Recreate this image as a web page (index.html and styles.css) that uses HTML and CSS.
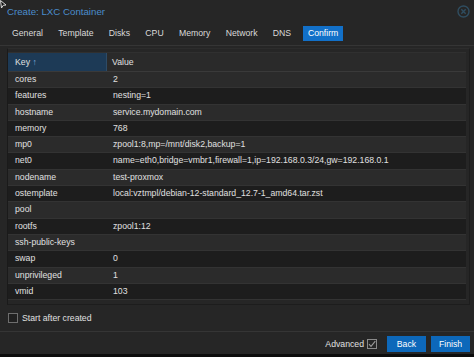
FILE: index.html
```html
<!DOCTYPE html>
<html>
<head>
<meta charset="utf-8">
<link rel="stylesheet" href="styles.css">
</head>
<body>
<div class="win">
  <div class="titlebar">
    <svg class="cursor" width="8" height="9" viewBox="0 0 8 9"><path d="M0.5 0.5 L6 5 L3.2 5.3 L1.5 8 Z" fill="#111" stroke="#ddd" stroke-width="1"/></svg>
    <span class="title">Create: LXC Container</span>
    <svg class="close" width="13" height="13" viewBox="0 0 13 13"><circle cx="6.5" cy="6.5" r="5.5" fill="none" stroke="#2f4d60" stroke-width="1.4"/><path d="M4.3 4.3 L8.7 8.7 M8.7 4.3 L4.3 8.7" stroke="#2f4d60" stroke-width="1.4"/></svg>
  </div>
  <div class="tabs">
    <span class="tab">General</span>
    <span class="tab">Template</span>
    <span class="tab">Disks</span>
    <span class="tab">CPU</span>
    <span class="tab">Memory</span>
    <span class="tab">Network</span>
    <span class="tab">DNS</span>
    <span class="tab active">Confirm</span>
  </div>
  <div class="panel">
    <div class="grid">
      <div class="row head"><div class="k">Key <span class="arrow">↑</span></div><div class="v">Value</div></div>
      <div class="row l"><div class="k">cores</div><div class="v">2</div></div>
      <div class="row d"><div class="k">features</div><div class="v">nesting=1</div></div>
      <div class="row l"><div class="k">hostname</div><div class="v">service.mydomain.com</div></div>
      <div class="row d"><div class="k">memory</div><div class="v">768</div></div>
      <div class="row l"><div class="k">mp0</div><div class="v">zpool1:8,mp=/mnt/disk2,backup=1</div></div>
      <div class="row d"><div class="k">net0</div><div class="v">name=eth0,bridge=vmbr1,firewall=1,ip=192.168.0.3/24,gw=192.168.0.1</div></div>
      <div class="row l"><div class="k">nodename</div><div class="v">test-proxmox</div></div>
      <div class="row d"><div class="k">ostemplate</div><div class="v">local:vztmpl/debian-12-standard_12.7-1_amd64.tar.zst</div></div>
      <div class="row l"><div class="k">pool</div><div class="v"></div></div>
      <div class="row d"><div class="k">rootfs</div><div class="v">zpool1:12</div></div>
      <div class="row l"><div class="k">ssh-public-keys</div><div class="v"></div></div>
      <div class="row d"><div class="k">swap</div><div class="v">0</div></div>
      <div class="row l"><div class="k">unprivileged</div><div class="v">1</div></div>
      <div class="row d"><div class="k">vmid</div><div class="v">103</div></div>
    </div>
  </div>
  <div class="startrow">
    <span class="cb"></span><span>Start after created</span>
  </div>
  <div class="footer">
    <span class="adv">Advanced</span>
    <svg class="cbsvg" width="10" height="10" viewBox="0 0 10 10"><rect x="0.5" y="0.5" width="9" height="9" fill="none" stroke="#8a8a8a"/><path d="M2 5.2 L4 7.4 L8.3 2.2" fill="none" stroke="#9a9a9a" stroke-width="1.1"/></svg>
    <span class="btn">Back</span>
    <span class="btn">Finish</span>
  </div>
</div>
</body>
</html>
```
FILE: styles.css
```css
html, body {
  margin: 0;
  padding: 0;
}
body {
  width: 474px;
  height: 357px;
  overflow: hidden;
  background: #0c0c0c;
  font-family: "Liberation Sans", Arial, sans-serif;
  font-size: 8.7px;
  color: #e0e0e0;
}
.win {
  height: 354px;
  background: #262626;
  display: flex;
  flex-direction: column;
  position: relative;
}
.titlebar {
  height: 22px;
  display: flex;
  align-items: center;
  padding: 0 4px 0 7px;
  box-sizing: border-box;
}
.cursor {
  position: absolute;
  left: 0;
  top: 0;
}
.title {
  font-size: 9.7px;
  color: #4b8dcc;
}
.close {
  margin-left: auto;
  margin-top: 1px;
}
.tabs {
  display: flex;
  gap: 5.3px;
  padding: 4px 0 0 7px;
  height: 24px;
  box-sizing: border-box;
  border-bottom: 1px solid #353535;
}
.tab {
  height: 15px;
  line-height: 15px;
  padding: 0 5px;
  color: #dadada;
}
.tab.active {
  background: #1270c8;
  color: #fff;
  margin-left: 2px;
  padding: 0 4.5px;
}
.panel {
  margin: 2px 4px 0 7px;
  border: 1px solid #1d1d1d;
  border-top-color: #2c2c2c;
  border-left-color: #1a1a1a;
  padding: 3px 3px 3px 0;
  height: 257px;
  box-sizing: border-box;
}
.grid {
  background: #222;
}
.row {
  display: flex;
  height: 16.3px;
  line-height: 15.3px;
  box-sizing: border-box;
  border-bottom: 1px solid #333;
}
.row.l { background: #2b2b2b; }
.row.d { background: #1d1d1d; }
.row.head {
  height: 20px;
  line-height: 19px;
  background: #2a2a2a;
  border-top: 1px solid #303030;
  border-bottom: 1px solid #3a3a3a;
}
.k {
  width: 99px;
  padding-left: 7px;
  box-sizing: border-box;
  flex: none;
}
.head .k {
  background: #1d3a56;
  border-right: 1px solid #2e4b66;
}
.arrow {
  color: #7aa7d6;
}
.v {
  padding-left: 6px;
  white-space: nowrap;
}
.head .v {
  padding-left: 5px;
}
.startrow {
  height: 26px;
  display: flex;
  align-items: center;
  gap: 4px;
  padding-left: 8px;
  border-bottom: 1px solid #353535;
}
.cb {
  width: 8px;
  height: 8px;
  border: 1px solid #6e6e6e;
  background: #202020;
}
.footer {
  flex: 1;
  display: flex;
  align-items: center;
  justify-content: flex-end;
  padding-right: 4px;
  padding-top: 1px;
}
.adv {
  margin-right: 3px;
}
.cbsvg {
  margin-right: 5px;
}
.btn {
  height: 16px;
  line-height: 16px;
  width: 39px;
  text-align: center;
  background: #0d68ba;
  color: #fff;
  margin-left: 5px;
}
.btn:first-of-type {
  margin-left: 0;
}
```
